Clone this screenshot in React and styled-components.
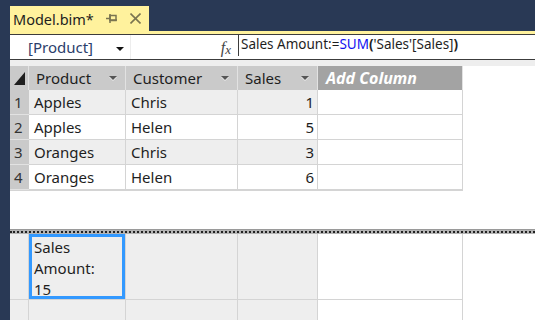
import React from 'react';
import styled, { createGlobalStyle } from 'styled-components';

const GlobalStyle = createGlobalStyle`
  body {
    margin: 0;
    background: #293955;
    overflow: hidden;
  }
`;

const UI_FONT = `"Segoe UI", "Noto Sans", "Open Sans", sans-serif`;

// Overall editor window
const Window = styled.div`
  width: 535px;
  height: 320px;
  display: flex;
  flex-direction: column;
  background: #293955;
  font-family: ${UI_FONT};
  color: #1e1e1e;
  overflow: hidden;
`;

const TabRow = styled.div`
  display: flex;
  flex-shrink: 0;
  height: 25px;
  padding: 6px 0 0 10px;
`;

const Tab = styled.div`
  width: 139px;
  background: #fff29d;
  display: flex;
  align-items: center;
  padding-left: 3px;
  box-sizing: border-box;
  font-size: 14.5px;
`;

const TabTitle = styled.span`
  flex: 1;
`;

const TabIcon = styled.svg`
  margin-right: ${(p) => p.gap || 0}px;
`;

const Body = styled.div`
  flex: 1;
  min-height: 0;
  margin-left: 10px;
  background: #fff;
  border-top: 3px solid #fff29d;
  display: flex;
  flex-direction: column;
`;

// Formula bar
const FormulaBar = styled.div`
  display: flex;
  flex-shrink: 0;
  height: 24px;
  border-top: 1px solid #3c3c3c;
  border-bottom: 1px solid #3c3c3c;
  background: #fff;
`;

const NameBox = styled.div`
  width: 121px;
  border-right: 1px solid #ededed;
  display: flex;
  align-items: center;
  justify-content: space-between;
  padding: 0 6px 0 18px;
  box-sizing: border-box;
  font-size: 15px;
  color: #2b3d6b;
`;

const Caret = styled.span`
  width: 0;
  height: 0;
  border-left: 4px solid transparent;
  border-right: 4px solid transparent;
  border-top: 4px solid #111;
  margin-top: 3px;
`;

const FxBox = styled.div`
  width: 107px;
  display: flex;
  align-items: flex-end;
  justify-content: flex-end;
  padding-right: 7px;
  box-sizing: border-box;
  font-family: "Liberation Serif", "DejaVu Serif", serif;
  font-style: italic;
  font-size: 16px;
  color: #444;
  line-height: 22px;
`;

const FxSub = styled.span`
  font-size: 13px;
  position: relative;
  top: 2px;
`;

const FormulaText = styled.div`
  flex: 1;
  margin: 0 0 3px 0;
  border-left: 1px solid #3c3c3c;
  padding-left: 2px;
  font-size: 13.5px;
  line-height: 18px;
  display: flex;
  align-items: flex-start;
`;

const Token = styled.span`
  color: ${(p) => (p.fn ? '#1010f0' : '#1e1e1e')};
  font-weight: ${(p) => (p.bold ? 700 : 400)};
`;

const Band = styled.div`
  flex-shrink: 0;
  height: 6px;
  background: #eeeeee;
`;

// Data grid
const DataArea = styled.div`
  flex-shrink: 0;
  height: 163px;
  background: #fff;
`;

const COLS = '19px 97px 112px 80px 145px';

const Grid = styled.div`
  display: grid;
  grid-template-columns: ${COLS};
  grid-template-rows: 24px repeat(4, 25px);
  width: 453px;
  border-bottom: 1px solid #d4d4d4;
`;

const HeadCell = styled.div`
  background: ${(p) => (p.add ? '#a3a3a3' : '#cacaca')};
  border-right: 1px solid #e2e2e2;
  display: flex;
  align-items: center;
  justify-content: space-between;
  padding: 0 8px 0 ${(p) => (p.add ? 8 : 7)}px;
  font-size: ${(p) => (p.add ? 16 : 15)}px;
  color: ${(p) => (p.add ? '#fff' : '#1e1e1e')};
  font-weight: ${(p) => (p.add ? 700 : 400)};
  font-style: ${(p) => (p.add ? 'italic' : 'normal')};
  box-sizing: border-box;
`;

const Corner = styled.div`
  background: #cacaca;
  border-right: 1px solid #e2e2e2;
  position: relative;
`;

const CornerMark = styled.span`
  position: absolute;
  right: 3px;
  bottom: 5px;
  width: 0;
  height: 0;
  border-left: 11px solid transparent;
  border-bottom: 13px solid #1e1e1e;
`;

const FilterArrow = styled.span`
  width: 0;
  height: 0;
  border-left: 4px solid transparent;
  border-right: 4px solid transparent;
  border-top: 4px solid #555;
  filter: drop-shadow(0 1px 0 #eee);
`;

const RowHead = styled.div`
  background: #cacaca;
  border-bottom: 1px solid #e2e2e2;
  display: flex;
  align-items: center;
  padding-left: 4px;
  font-size: 15px;
  color: #333;
`;

const Cell = styled.div`
  background: ${(p) => (p.shade ? '#eeeeee' : '#fff')};
  border-right: 1px solid #d4d4d4;
  border-bottom: 1px solid #d4d4d4;
  display: flex;
  align-items: center;
  justify-content: ${(p) => (p.num ? 'flex-end' : 'flex-start')};
  padding: 0 3px 0 5px;
  font-size: 15px;
`;

// Splitter between the data grid and the measure grid
const Splitter = styled.div`
  flex-shrink: 0;
  height: 5px;
  background: #b4b4b4;
  box-sizing: border-box;
  border-top: 1px solid #9a9a9a;
  display: flex;
  align-items: center;
`;

const SplitterDots = styled.div`
  flex: 1;
  border-top: 2px dotted #222;
`;

// Measure grid
const MeasureArea = styled.div`
  flex: 1;
  min-height: 0;
  background: #fff;
  overflow: hidden;
`;

const MeasureGrid = styled.div`
  display: grid;
  grid-template-columns: ${COLS};
  grid-template-rows: 66px 30px;
  width: 453px;
`;

const MCell = styled.div`
  background: ${(p) => (p.white ? '#fff' : '#eeeeee')};
  border-right: 1px solid #d4d4d4;
  border-bottom: 1px solid #d4d4d4;
  position: relative;
`;

const SelectedMeasure = styled.div`
  position: absolute;
  inset: 0 0 0 0;
  border: 3px solid #3399ff;
  padding: 0 2px;
  font-size: 15px;
  line-height: 21px;
`;

const PinIcon = () => (
  <TabIcon width="12" height="11" viewBox="0 0 12 11" gap={12}>
    <g stroke="#7a7450" strokeWidth="1.5" fill="none">
      <line x1="0" y1="5.5" x2="4" y2="5.5" />
      <line x1="4" y1="1" x2="4" y2="10" />
      <rect x="4" y="2.5" width="6" height="5" />
      <line x1="4" y1="7" x2="11" y2="7" />
    </g>
  </TabIcon>
);

const CloseIcon = () => (
  <TabIcon width="11" height="11" viewBox="0 0 11 11" gap={8}>
    <g stroke="#7a7450" strokeWidth="1.6">
      <line x1="0.5" y1="0.5" x2="10.5" y2="10.5" />
      <line x1="10.5" y1="0.5" x2="0.5" y2="10.5" />
    </g>
  </TabIcon>
);

const rows = [
  ['Apples', 'Chris', 1],
  ['Apples', 'Helen', 5],
  ['Oranges', 'Chris', 3],
  ['Oranges', 'Helen', 6],
];

export default function App() {
  return (
    <>
      <GlobalStyle />
      <Window>
        <TabRow>
          <Tab>
            <TabTitle>Model.bim*</TabTitle>
            <PinIcon />
            <CloseIcon />
          </Tab>
        </TabRow>
        <Body>
          <FormulaBar>
            <NameBox>
              [Product]
              <Caret />
            </NameBox>
            <FxBox>
              f<FxSub>x</FxSub>
            </FxBox>
            <FormulaText>
              <Token>Sales Amount:=</Token>
              <Token fn>SUM</Token>
              <Token bold>(</Token>
              <Token>'Sales'[Sales]</Token>
              <Token bold>)</Token>
            </FormulaText>
          </FormulaBar>
          <Band />
          <DataArea>
            <Grid>
              <Corner>
                <CornerMark />
              </Corner>
              <HeadCell>
                Product <FilterArrow />
              </HeadCell>
              <HeadCell>
                Customer <FilterArrow />
              </HeadCell>
              <HeadCell>
                Sales <FilterArrow />
              </HeadCell>
              <HeadCell add>Add Column</HeadCell>
              {rows.map((r, i) => (
                <React.Fragment key={i}>
                  <RowHead>{i + 1}</RowHead>
                  <Cell shade={i % 2 === 0}>{r[0]}</Cell>
                  <Cell shade={i % 2 === 0}>{r[1]}</Cell>
                  <Cell shade={i % 2 === 0} num>
                    {r[2]}
                  </Cell>
                  <Cell />
                </React.Fragment>
              ))}
            </Grid>
          </DataArea>
          <Splitter>
            <SplitterDots />
          </Splitter>
          <MeasureArea>
            <MeasureGrid>
              <MCell />
              <MCell>
                <SelectedMeasure>
                  Sales
                  <br />
                  Amount:
                  <br />
                  15
                </SelectedMeasure>
              </MCell>
              <MCell />
              <MCell />
              <MCell white />
              <MCell />
              <MCell />
              <MCell />
              <MCell />
              <MCell white />
            </MeasureGrid>
          </MeasureArea>
        </Body>
      </Window>
    </>
  );
}
